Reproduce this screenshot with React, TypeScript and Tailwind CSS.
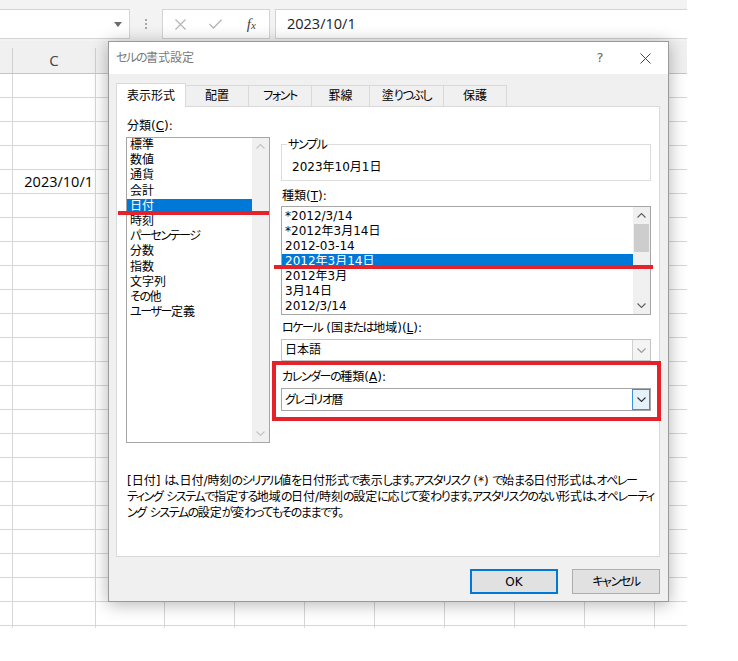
import React from "react";

const F =
  "[font-family:'DejaVu_Sans','Noto_Sans_CJK_JP',sans-serif] [font-feature-settings:'palt']";

function J({ t }: { t: string }) {
  const parts = t.split(/([\u3000-\u30ff]+)/);
  return (
    <>
      {parts.map((p, i) =>
        i % 2 === 1 ? (
          <span key={i} className="tracking-[-1.4px]">
            {p}
          </span>
        ) : (
          <React.Fragment key={i}>{p}</React.Fragment>
        )
      )}
    </>
  );
}

function Chev({
  dir = "down",
  color = "#606060",
  w = 9,
  h = 5,
}: {
  dir?: "up" | "down";
  color?: string;
  w?: number;
  h?: number;
}) {
  const d =
    dir === "down"
      ? `M0.5 0.5 L${w / 2} ${h - 0.5} L${w - 0.5} 0.5`
      : `M0.5 ${h - 0.5} L${w / 2} 0.5 L${w - 0.5} ${h - 0.5}`;
  return (
    <svg width={w} height={h} viewBox={`0 0 ${w} ${h}`}>
      <path d={d} fill="none" stroke={color} strokeWidth="1.1" />
    </svg>
  );
}

function VScroll({ disabled, thumb }: { disabled?: boolean; thumb?: boolean }) {
  const c = disabled ? "#c4c4c4" : "#606060";
  return (
    <div className="flex w-[17px] flex-col bg-[#f0f0f0]">
      <div className="flex h-[17px] items-center justify-center">
        <Chev dir="up" color={c} />
      </div>
      <div className="flex-1 px-[1px]">
        {thumb ? <div className="h-[28px] bg-[#cdcdcd]" /> : null}
      </div>
      <div className="flex h-[17px] items-center justify-center">
        <Chev dir="down" color={c} />
      </div>
    </div>
  );
}

const cats = [
  "標準",
  "数値",
  "通貨",
  "会計",
  "日付",
  "時刻",
  "パーセンテージ",
  "分数",
  "指数",
  "文字列",
  "その他",
  "ユーザー定義",
];

const types = [
  "*2012/3/14",
  "*2012年3月14日",
  "2012-03-14",
  "2012年3月14日",
  "2012年3月",
  "3月14日",
  "2012/3/14",
];

const tabs = [
  { t: "表示形式", w: "w-[70px]", sel: true },
  { t: "配置", w: "w-[64px]", sel: false },
  { t: "フォント", w: "w-[64px]", sel: false },
  { t: "罫線", w: "w-[59px]", sel: false },
  { t: "塗りつぶし", w: "w-[75px]", sel: false },
  { t: "保護", w: "w-[64px]", sel: false },
];

const colW = [13, 83, 69, 70, 70, 70, 70, 70, 70, 70, 32];

function Toolbar() {
  return (
    <div className="flex h-[41px] items-start bg-[#f3f3f3] pt-[9px]">
      <div className="flex h-[30px] w-[130px] items-center justify-end border-y border-r border-[#d4d4d4] bg-white pr-[7px]">
        <svg width="8" height="5" viewBox="0 0 8 5">
          <path d="M0 0H8L4 5Z" fill="#6b6b6b" />
        </svg>
      </div>
      <div className="flex h-[30px] w-[32px] flex-col items-center justify-center gap-[2px]">
        <div className="h-[2px] w-[2px] bg-[#a8a8a8]" />
        <div className="h-[2px] w-[2px] bg-[#a8a8a8]" />
        <div className="h-[2px] w-[2px] bg-[#a8a8a8]" />
      </div>
      <div className="grid h-[30px] w-[108px] grid-cols-3 items-center justify-items-center border border-[#d4d4d4] bg-white">
        <svg width="11" height="11" viewBox="0 0 11 11">
          <path d="M0.5 0.5L10.5 10.5M10.5 0.5L0.5 10.5" stroke="#b5b5b5" strokeWidth="1.2" />
        </svg>
        <svg width="13" height="10" viewBox="0 0 13 10">
          <path d="M0.5 5L4.5 9L12.5 0.8" fill="none" stroke="#b5b5b5" strokeWidth="1.3" />
        </svg>
        <span className="[font-family:'Liberation_Serif',serif] text-[15px] italic leading-none text-[#444]">
          f<span className="text-[11px]">x</span>
        </span>
      </div>
      <div className="ml-[5px] flex h-[30px] flex-1 items-center border-y border-l border-[#d4d4d4] bg-white pl-[11px] [font-family:'Open_Sans',sans-serif] text-[14.5px] text-[#222]">
        2023/10/1
      </div>
    </div>
  );
}

function Header() {
  return (
    <div className="flex h-[33px] items-end border-b border-[#c6c6c6] bg-[#f0f0f0]">
      {colW.map((w, i) => (
        <div
          key={i}
          style={{ width: w }}
          className={
            i < colW.length - 1
              ? "flex h-[25px] items-center justify-center border-r border-[#d0d0d0] [font-family:'Open_Sans',sans-serif] text-[15px] text-[#444]"
              : "h-[25px]"
          }
        >
          {i === 1 ? "C" : ""}
        </div>
      ))}
    </div>
  );
}

function Grid() {
  const rows = Array.from({ length: 24 }, (_, i) => i);
  return (
    <div className="grid grid-cols-[13px_83px_69px_70px_70px_70px_70px_70px_70px_70px_32px]">
      {rows.map((r) =>
        colW.map((_, c) => {
          const last = r === 23;
          const cls = last
            ? c < 10
              ? "h-[2px] border-r border-[#d6d6d6]"
              : "h-[2px]"
            : c < 10
              ? "h-[24px] border-r border-b border-[#d6d6d6]"
              : "h-[24px] border-b border-[#d6d6d6]";
          return (
            <div key={`${r}-${c}`} className={cls}>
              {r === 4 && c === 1 ? (
                <div className="flex h-full items-center justify-end pr-[2px] [font-family:'Open_Sans',sans-serif] text-[14.5px] text-black">
                  2023/10/1
                </div>
              ) : null}
            </div>
          );
        })
      )}
    </div>
  );
}

function Dialog() {
  return (
    <div
      className={`absolute left-[108px] top-[41px] flex h-[561px] w-[561px] flex-col border border-[#9a9a9a] bg-[#f0f0f0] text-[12px] text-black shadow-[0_2px_16px_rgba(0,0,0,0.3)] ${F}`}
    >
      <div className="flex h-[32px] items-center bg-white pl-[7px]">
        <span className="flex-1 text-[#7a7a7a]">
          <J t="セルの書式設定" />
        </span>
        <span className="w-[20px] text-center text-[13px] text-[#666]">?</span>
        <span className="ml-[12px] flex w-[46px] items-center justify-center">
          <svg width="11" height="11" viewBox="0 0 11 11">
            <path d="M0.5 0.5L10.5 10.5M10.5 0.5L0.5 10.5" stroke="#444" strokeWidth="1" />
          </svg>
        </span>
      </div>
      <div className="flex flex-1 flex-col pl-[7px] pr-[8px] pt-[9px]">
        <div className="flex h-[23px] items-end">
          {tabs.map((t) => (
            <div
              key={t.t}
              className={
                t.sel
                  ? `relative z-10 -mb-[1px] flex h-[24px] items-center justify-center border-x border-t border-[#d9d9d9] bg-white ${t.w}`
                  : `-ml-[1px] flex h-[21px] items-center justify-center border-x border-t border-[#d9d9d9] bg-[#f0f0f0] ${t.w}`
              }
            >
              <J t={t.t} />
            </div>
          ))}
        </div>
        <div className="h-[451px] border border-[#d9d9d9] bg-white pl-[9px] pt-[11px]">
          <div className="flex">
            <div className="flex w-[144px] flex-col">
              <div className="h-[16px] pl-[1px] leading-[16px]">
                分類(<span className="underline">C</span>):
              </div>
              <div className="mt-[3px] flex h-[306px] border border-[#a6a6a6]">
                <div className="flex-1">
                  {cats.map((c) => (
                    <div
                      key={c}
                      className={
                        c === "日付"
                          ? "h-[15.2px] whitespace-nowrap bg-[#0078d7] pl-[3px] leading-[15.2px] text-white"
                          : "h-[15.2px] whitespace-nowrap pl-[3px] leading-[15.2px]"
                      }
                    >
                      <J t={c} />
                    </div>
                  ))}
                </div>
                <VScroll disabled />
              </div>
            </div>
            <div className="ml-[11px] flex w-[370px] flex-col">
              <div className="relative mt-[26px] h-[37px] border border-[#dcdcdc] pl-[10px] pt-[14px] leading-[16px]">
                <span className="absolute -top-[8px] left-[5px] bg-white px-[1px] leading-[16px]">
                  <J t="サンプル" />
                </span>
                2023年10月1日
              </div>
              <div className="mt-[7px] h-[16px] pl-[1px] leading-[16px]">
                種類(<span className="underline">T</span>):
              </div>
              <div className="mt-[2px] flex h-[109px] border border-[#a6a6a6]">
                <div className="flex-1 pt-[2px]">
                  {types.map((t, i) => (
                    <div
                      key={t}
                      className={
                        i === 3
                          ? "h-[15px] whitespace-nowrap bg-[#0078d7] pl-[3px] leading-[15px] text-white"
                          : "h-[15px] whitespace-nowrap pl-[3px] leading-[15px]"
                      }
                    >
                      {t}
                    </div>
                  ))}
                </div>
                <VScroll thumb />
              </div>
              <div className="mt-[5px] h-[16px] pl-[1px] leading-[16px]">
                <J t="ロケール" /> (国<J t="または" />地域)(<span className="underline">L</span>):
              </div>
              <div className="mt-[3px] flex h-[22px] border border-[#c3c3c3]">
                <div className="flex flex-1 items-center pl-[3px]">日本語</div>
                <div className="flex w-[18px] items-center justify-center border-l border-[#d0d0d0] bg-[#f4f4f4]">
                  <Chev color="#9a9a9a" w={9} h={5} />
                </div>
              </div>
              <div className="mt-[8px] h-[16px] pl-[1px] leading-[16px]">
                <J t="カレンダーの" />種類(<span className="underline">A</span>):
              </div>
              <div className="mt-[3px] flex h-[23px] border border-[#a6a6a6]">
                <div className="flex flex-1 items-center pl-[3px]">
                  <J t="グレゴリオ暦" />
                </div>
                <div className="flex w-[18px] items-center justify-center border border-[#3c8fdc] bg-[#e5f1fb]">
                  <Chev color="#333" w={9} h={5} />
                </div>
              </div>
            </div>
          </div>
          <div className="mt-[30px] whitespace-nowrap pl-[1px] leading-[16px]">
            <div>
              <J t="[日付] は、日付/時刻のシリアル値を日付形式で表示します。アスタリスク (*) で始まる日付形式は、オペレー" />
            </div>
            <div>
              <J t="ティング システムで指定する地域の日付/時刻の設定に応じて変わります。アスタリスクのない形式は、オペレーティ" />
            </div>
            <div>
              <J t="ング システムの設定が変わってもそのままです。" />
            </div>
          </div>
        </div>
        <div className="mt-[12px] flex justify-end gap-[14px]">
          <div className="flex h-[25px] w-[88px] items-center justify-center border-2 border-[#0078d7] bg-[#e1e1e1]">
            OK
          </div>
          <div className="flex h-[25px] w-[88px] items-center justify-center border border-[#adadad] bg-[#e1e1e1]">
            <J t="キャンセル" />
          </div>
        </div>
      </div>
    </div>
  );
}

export default function App() {
  return (
    <div className="relative h-[661px] w-[738px] overflow-hidden bg-white">
      <div className="flex w-[687px] flex-col">
        <Toolbar />
        <Header />
        <Grid />
      </div>
      <Dialog />
      <div className="absolute left-[118px] top-[211px] h-[4px] w-[151px] bg-[#e5222a]" />
      <div className="absolute left-[274px] top-[265px] h-[4px] w-[379px] bg-[#e5222a]" />
      <div className="absolute left-[272px] top-[361px] h-[60px] w-[389px] border-4 border-[#e5222a]" />
    </div>
  );
}
